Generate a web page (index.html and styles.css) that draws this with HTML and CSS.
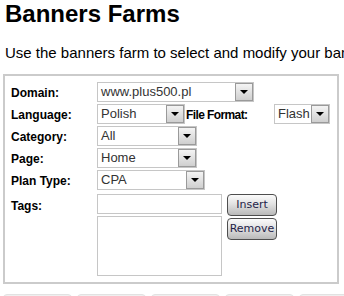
FILE: index.html
```html
<!DOCTYPE html>
<html lang="en">
<head>
  <meta charset="utf-8">
  <title>Banners Farms</title>
  <link rel="stylesheet" href="styles.css">
</head>
<body>
<div class="page">
  <h1 class="title">Banners Farms</h1>
  <p class="intro">Use the banners farm to select and modify your banners.</p>

  <div class="farm-box">
    <div class="row">
      <label class="label">Domain:</label>
      <div class="select w-domain"><span>www.plus500.pl</span><i class="arrow"></i></div>
    </div>
    <div class="row">
      <label class="label">Language:</label>
      <div class="select w-lang"><span>Polish</span><i class="arrow"></i></div>
      <label class="label label-format">File Format:</label>
      <div class="select w-format"><span>Flash</span><i class="arrow"></i></div>
    </div>
    <div class="row">
      <label class="label">Category:</label>
      <div class="select w-cat"><span>All</span><i class="arrow"></i></div>
    </div>
    <div class="row">
      <label class="label">Page:</label>
      <div class="select w-cat"><span>Home</span><i class="arrow"></i></div>
    </div>
    <div class="row row-last">
      <label class="label">Plan Type:</label>
      <div class="select w-plan"><span>CPA</span><i class="arrow"></i></div>
    </div>
    <div class="tags">
      <label class="label label-tags">Tags:</label>
      <div class="tag-fields">
        <input class="tag-input" type="text">
        <textarea class="tag-list"></textarea>
      </div>
      <div class="tag-buttons">
        <button class="btn">Insert</button>
        <button class="btn">Remove</button>
      </div>
    </div>
  </div>

  <div class="tabs">
    <div class="tab"></div>
    <div class="tab"></div>
    <div class="tab"></div>
    <div class="tab"></div>
    <div class="tab"></div>
  </div>
</div>
</body>
</html>
```

FILE: styles.css
```css
* {
  margin: 0;
  padding: 0;
  box-sizing: border-box;
}

body {
  font-family: "Liberation Sans", Arial, sans-serif;
  color: #000;
  background: #fff;
  overflow: hidden;
}

.page {
  padding-left: 3px;
}

.title {
  padding-left: 2px;
  font-size: 24px;
  line-height: 28px;
  font-weight: bold;
}

.intro {
  padding-left: 2px;
  margin-top: 15px;
  font-size: 15px;
  line-height: 20px;
  white-space: nowrap;
  overflow: hidden;
}

.farm-box {
  width: 336px;
  margin-top: 11px;
  border: 2px solid #cbcbcb;
  padding: 6px 6px 6px 6px;
}

.row {
  display: flex;
  align-items: center;
  height: 20px;
  margin-bottom: 2px;
}

.row-last {
  margin-bottom: 4px;
}

.label {
  width: 86px;
  flex: none;
  font-size: 12px;
  font-weight: bold;
  padding-top: 2px;
}

.label-format {
  width: 88px;
  margin-left: 1px;
  letter-spacing: -0.6px;
}

.select {
  position: relative;
  flex: none;
  height: 20px;
  border: 1px solid #c6c6c6;
  background: #fff;
  font-size: 13px;
  color: #333;
  padding-left: 3px;
  line-height: 18px;
  white-space: nowrap;
  overflow: hidden;
}

.arrow {
  position: absolute;
  top: 0;
  right: 0;
  width: 18px;
  height: 18px;
  border: 1px solid #9a9a9a;
  background: linear-gradient(#f4f4f4, #cfcfcf);
}

.arrow::after {
  content: "";
  position: absolute;
  left: 4px;
  top: 6px;
  border-left: 4px solid transparent;
  border-right: 4px solid transparent;
  border-top: 4px solid #000;
}

.w-domain { width: 157px; }
.w-lang { width: 88px; }
.w-format { width: 56px; }
.w-cat { width: 100px; }
.w-plan { width: 108px; }

.tags {
  display: flex;
}

.label-tags {
  padding-top: 5px;
}

.tag-fields {
  display: flex;
  flex-direction: column;
  gap: 2px;
  width: 125px;
}

.tag-input {
  height: 20px;
  border: 1px solid #c6c6c6;
}

.tag-list {
  height: 60px;
  border: 1px solid #c6c6c6;
  resize: none;
}

.tag-buttons {
  display: flex;
  flex-direction: column;
  gap: 2px;
  margin-left: 5px;
}

.btn {
  width: 50px;
  height: 22px;
  border: 1px solid #4e4e4e;
  border-radius: 4px;
  background: linear-gradient(#fbfbfb, #e2e2e2 45%, #b9b9b9);
  color: #1f2348;
  font-family: "DejaVu Sans", sans-serif;
  font-size: 11px;
  line-height: 20px;
}

.tabs {
  display: flex;
  gap: 5px;
  margin-top: 10px;
}

.tab {
  width: 69px;
  height: 20px;
  flex: none;
  background: #efefef;
  border: 1px solid #e2e2e2;
  border-radius: 4px 4px 0 0;
}
```
